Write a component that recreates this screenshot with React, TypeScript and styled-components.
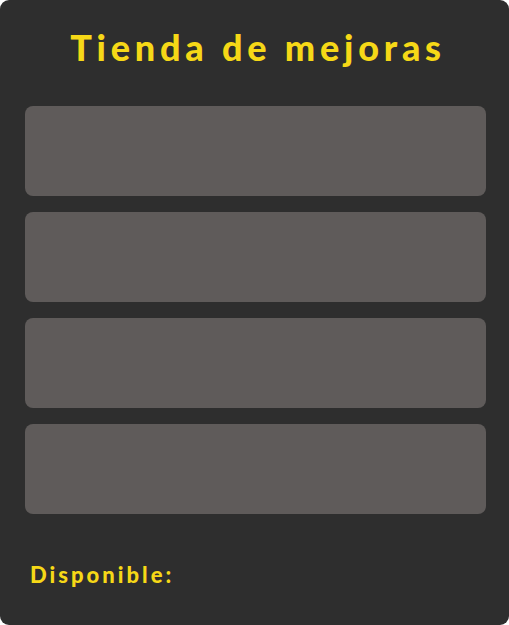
import React from "react";
import styled, { createGlobalStyle } from "styled-components";

const Global = createGlobalStyle`
  html, body { margin: 0; padding: 0; background: #ffffff; }
  #root { width: 509px; height: 625px; }
`;

const Panel = styled.div`
  box-sizing: border-box;
  width: 509px;
  height: 625px;
  background: #2e2e2e;
  border-radius: 9px;
  padding: 0 23px 0 25px;
  display: flex;
  flex-direction: column;
  font-family: Lato, "DejaVu Sans Condensed", sans-serif;
  font-weight: 900;
  color: #f6d817;
`;

const Title = styled.h1`
  margin: 0;
  height: 106px;
  box-sizing: border-box;
  padding-top: 27px;
  padding-left: 5px;
  text-align: center;
  font-size: 36px;
  font-weight: 900;
  letter-spacing: 4.8px;
  line-height: 40px;
`;

const List = styled.div`
  display: flex;
  flex-direction: column;
  gap: 16px;
`;

const Card = styled.div`
  height: 90px;
  background: #5f5b5a;
  border-radius: 8px;
`;

const Footer = styled.div`
  margin-top: 47px;
  padding-left: 5px;
  font-size: 22px;
  letter-spacing: 3px;
  line-height: 28px;
`;

export default function App() {
  return (
    <>
      <Global />
      <Panel>
        <Title>Tienda de mejoras</Title>
        <List>
          {[0, 1, 2, 3].map((i) => (
            <Card key={i} />
          ))}
        </List>
        <Footer>Disponible:</Footer>
      </Panel>
    </>
  );
}
